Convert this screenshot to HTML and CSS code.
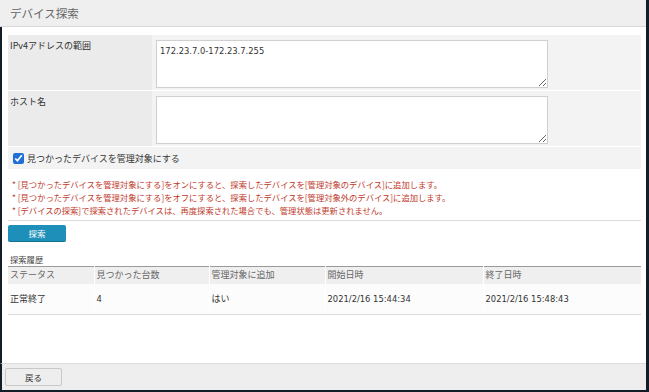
FILE: index.html
```html
<!DOCTYPE html>
<html lang="ja">
<head>
<meta charset="utf-8">
<link rel="stylesheet" href="styles.css">
</head>
<body>
<div class="window">
  <header class="titlebar">デバイス探索</header>
  <main class="main">
    <div class="form">
      <div class="row">
        <div class="label">IPv4アドレスの範囲</div>
        <div class="value"><textarea class="area">172.23.7.0-172.23.7.255</textarea></div>
      </div>
      <div class="row">
        <div class="label">ホスト名</div>
        <div class="value"><textarea class="area"></textarea></div>
      </div>
      <div class="row check-row">
        <label class="check"><input type="checkbox" checked><span>見つかったデバイスを管理対象にする</span></label>
      </div>
    </div>
    <ul class="notes">
      <li>* [見つかったデバイスを管理対象にする]をオンにすると、探索したデバイスを[管理対象のデバイス]に追加します。</li>
      <li>* [見つかったデバイスを管理対象にする]をオフにすると、探索したデバイスを[管理対象外のデバイス]に追加します。</li>
      <li>* [デバイスの探索]で探索されたデバイスは、再度探索された場合でも、管理状態は更新されません。</li>
    </ul>
    <div class="actions"><button class="btn-primary">探索</button></div>
    <div class="history-title">探索履歴</div>
    <table class="history">
      <colgroup>
        <col class="c1"><col class="c2"><col class="c3"><col class="c4"><col class="c5">
      </colgroup>
      <thead>
        <tr><th>ステータス</th><th>見つかった台数</th><th>管理対象に追加</th><th>開始日時</th><th>終了日時</th></tr>
      </thead>
      <tbody>
        <tr><td>正常終了</td><td class="num">4</td><td>はい</td><td class="num">2021/2/16 15:44:34</td><td class="num">2021/2/16 15:48:43</td></tr>
      </tbody>
    </table>
  </main>
  <footer class="footer"><button class="btn">戻る</button></footer>
</div>
</body>
</html>
```
FILE: styles.css
```css
* { box-sizing: border-box; }
html, body { margin: 0; padding: 0; }
html { background: #131d27; }
body {
  background: #131d27;
  width: 649px;
  height: 392px;
  overflow: hidden;
  font-family: "Noto Sans CJK JP", "Noto Sans", sans-serif;
  color: #333;
}
.window {
  width: 646px;
  height: 390px;
  background: #fff;
  display: flex;
  flex-direction: column;
  overflow: hidden;
}
.titlebar {
  height: 27px;
  flex: none;
  background: #efefef;
  border-bottom: 1px solid #d9d9d9;
  padding: 4px 0 0 10px;
  font-size: 11.5px;
  color: #666;
  line-height: 18px;
}
.main {
  flex: 1 1 0;
  min-height: 0;
  overflow: hidden;
  border-left: 2px solid #131d27;
  padding: 8px 5px 0 6px;
}
.form { display: flex; flex-direction: column; gap: 1px; }
.row {
  display: flex;
  background: #f3f3f3;
}
.label {
  width: 144px;
  flex: none;
  background: #ebebeb;
  padding: 4px 2px;
  font-size: 9px;
  line-height: 14px;
  color: #333;
}
.value { flex: 1; padding: 5px 4px 2px; }
.area {
  display: block;
  width: 392px;
  height: 48px;
  border: 1px solid #cfcfcf;
  background: #fff;
  padding: 4px 3px;
  margin: 0;
  font-family: "DejaVu Sans", "Noto Sans CJK JP", sans-serif;
  font-size: 8.4px;
  line-height: 13px;
  color: #333;
  resize: both;
  outline: none;
}
.check-row { height: 22px; align-items: center; padding-left: 5px; }
.check { display: flex; align-items: center; gap: 3px; font-size: 9px; color: #333; }
.check input {
  margin: 0;
  width: 11px;
  height: 11px;
  accent-color: #1f6fd6;
}
.notes {
  list-style: none;
  margin: 0;
  padding: 9px 0 0 4px;
  font-size: 8.3px;
  line-height: 13px;
  color: #c0392b;
  height: 52px;
  border-bottom: 1px solid #dcdcdc;
}
.actions { padding-top: 4px; height: 22px; }
.btn-primary {
  display: block;
  width: 58px;
  height: 17px;
  background: #1e8fb9;
  border: none;
  border-bottom: 1px solid #157196;
  border-radius: 2px;
  color: #fff;
  font-family: "Noto Sans CJK JP", sans-serif;
  font-size: 8.5px;
  line-height: 16px;
  padding: 0;
}
.history-title {
  margin-top: 10px;
  font-size: 8.3px;
  line-height: 13px;
  padding-left: 2px;
  color: #444;
  height: 13px;
}
.history {
  width: 633px;
  border-collapse: collapse;
  font-size: 9px;
  color: #333;
  border-top: 1px solid #9a9a9a;
}
.c1 { width: 86px; } .c2 { width: 115px; } .c3 { width: 116px; } .c4 { width: 158px; } .c5 { width: 158px; }
.history th {
  text-align: left;
  font-weight: normal;
  background: #efefef;
  color: #666;
  height: 17px;
  padding: 0 2px;
  line-height: 14px;
  border-right: 1px solid #fff;
}
.history th:last-child { border-right: none; }
.history td {
  height: 31px;
  padding: 0 2px;
  line-height: 14px;
  background: #fcfcfc;
  border-bottom: 1px solid #dcdcdc;
  border-right: 1px solid #fff;
}
.history td.num {
  font-family: "DejaVu Sans", "Noto Sans CJK JP", sans-serif;
  font-size: 8.4px;
}
.history td:last-child { border-right: none; }
.footer {
  height: 27px;
  flex: none;
  background: #eeeeee;
  border-top: 1px solid #dcdcdc;
  border-left: 2px solid #131d27;
  padding: 4px 0 0 3px;
}
.btn {
  display: block;
  width: 57px;
  height: 18px;
  background: #eeeeee;
  border: 1px solid #c8c8c8;
  border-radius: 2px;
  font-family: "Noto Sans CJK JP", sans-serif;
  font-size: 8.5px;
  color: #333;
  padding: 0;
  line-height: 16px;
}
```
